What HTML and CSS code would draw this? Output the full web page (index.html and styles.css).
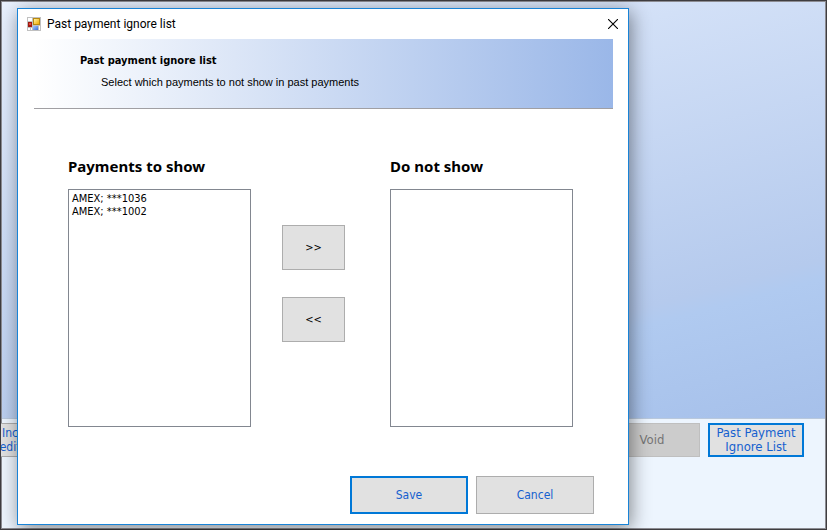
FILE: index.html
```html
<!DOCTYPE html>
<html lang="en">
<head>
<meta charset="utf-8">
<title>Past payment ignore list</title>
<link rel="stylesheet" href="styles.css">
</head>
<body>
<div class="app">
  <div class="workspace"></div>
  <footer class="actions">
    <button class="btn tool clipped" type="button">Inc<br>edit</button>
    <button class="btn tool void" type="button" disabled>Void</button>
    <button class="btn tool primary" type="button">Past Payment Ignore List</button>
  </footer>
</div>
<section class="dialog" role="dialog" aria-labelledby="caption">
  <div class="titlebar">
    <svg class="app-icon" viewBox="0 0 14 14" width="14" height="14" shape-rendering="crispEdges" aria-hidden="true">
      <defs>
        <linearGradient id="gold" x2="1" y2="1"><stop offset="0" stop-color="#fff0a0"/><stop offset="1" stop-color="#f0ac00"/></linearGradient>
        <linearGradient id="blue" x2="1" y2="1"><stop offset="0" stop-color="#a5c8ff"/><stop offset="1" stop-color="#3c70d8"/></linearGradient>
      </defs>
      <path fill="#c0c0c0" d="M0 0h14v14H0z"/>
      <path fill="#fff" d="M1 1h4v3H1zM1 11h2v2H1zM4 11h1v2H4zM12 9h1v4h-1z"/>
      <path fill="#a01810" d="M1 5h4v5H1z"/>
      <path fill="#e04838" d="M2 6h2v2H2z"/>
      <path fill="#b88810" d="M6 1h7v7H6z"/>
      <path fill="url(#gold)" d="M7 2h5v5H7z"/>
      <path fill="url(#blue)" d="M6 9h5v4H6z"/>
    </svg>
    <span class="caption" id="caption">Past payment ignore list</span>
    <button class="close" type="button" aria-label="Close">
      <svg viewBox="0 0 10 10" width="10" height="10" aria-hidden="true"><path d="M0 0l10 10M10 0L0 10" stroke="#000" stroke-width="1.1"/></svg>
    </button>
  </div>
  <header class="banner">
    <h1>Past payment ignore list</h1>
    <p>Select which payments to not show in past payments</p>
  </header>
  <div class="lists">
    <div class="column">
      <label for="shown">Payments to show</label>
      <select id="shown" multiple>
        <option>AMEX; ***1036</option>
        <option>AMEX; ***1002</option>
      </select>
    </div>
    <div class="movers">
      <button class="btn move" type="button">&gt;&gt;</button>
      <button class="btn move" type="button">&lt;&lt;</button>
    </div>
    <div class="column">
      <label for="hidden">Do not show</label>
      <select id="hidden" multiple></select>
    </div>
  </div>
  <div class="commands">
    <button class="btn command primary" type="button">Save</button>
    <button class="btn command" type="button">Cancel</button>
  </div>
</section>
</body>
</html>
```

FILE: styles.css
```css
* {
  box-sizing: border-box;
}

body {
  margin: 0;
  height: 100vh;
  position: relative;
  overflow: hidden;
  font-family: "Noto Sans", sans-serif;
  color: #000;
}

.app {
  height: 100%;
  display: flex;
  flex-direction: column;
  border: 1px solid #3f3d40;
  box-shadow: inset 0 0 0 1px #8c8c92;
  background: #edf5fe;
}

.workspace {
  flex: 1;
  margin: 1px 1px 0 1px;
  background: linear-gradient(165deg, #e9f1fe 0%, #d2e0f7 30%, #b5caed 75%, #b0caf0 78%, #a6c0ea 100%);
  border-bottom: 1px solid #b9c8dc;
}

.actions {
  display: flex;
  gap: 8px;
  height: 110px;
  padding: 4px 22px 0 0;
  overflow: hidden;
}

.btn {
  margin: 0;
  padding: 0;
  border: 1px solid #adadad;
  background: #e1e1e1;
  color: #1560cf;
  font: 12px/14px "DejaVu Sans Condensed", "DejaVu Sans", sans-serif;
}

.primary {
  border: 2px solid #0078d7;
}

.tool {
  width: 96px;
  height: 34px;
  font-size: 13px;
}

.clipped {
  width: 26px;
  margin-left: -4px;
  font-size: 12px;
}

.void {
  margin-left: auto;
  background: #cccccc;
  border-color: #bfbfbf;
  color: #757575;
}

.dialog {
  position: absolute;
  inset: 8px 198px 5px 17px;
  display: flex;
  flex-direction: column;
  border: 1px solid #1883d7;
  background: #fff;
  box-shadow: 2px 4px 18px rgba(0, 0, 0, 0.45);
}

.titlebar {
  display: flex;
  align-items: center;
  height: 30px;
  padding: 0 10px 0 9px;
}

.caption {
  margin-left: 6px;
  font: 12px/16px Roboto, sans-serif;
}

.close {
  display: flex;
  margin-left: auto;
  padding: 0;
  border: 0;
  background: none;
}

.banner {
  height: 70px;
  margin: 0 15px 0 16px;
  padding: 15px 0 0 46px;
  border-bottom: 1px solid #a09fa3;
  background: linear-gradient(90deg, #fff, #9ab7e8);
}

.banner h1 {
  margin: 0;
  font: bold 11px/14px "DejaVu Sans Condensed", sans-serif;
}

.banner p {
  margin: 7px 0 0 21px;
  font: 11px/14px "Liberation Sans", sans-serif;
}

.lists {
  display: flex;
  margin: 47px 0 0 50px;
}

.column {
  display: flex;
  flex-direction: column;
  width: 183px;
}

.column label {
  margin-bottom: 13px;
  font: bold 15px/20px "Noto Sans", sans-serif;
}

select {
  height: 238px;
  padding: 2px 1px;
  border: 1px solid #828790;
  border-radius: 0;
  background: #fff;
  color: #000;
  overflow: hidden;
  outline: 0;
  font: 11px/13px "DejaVu Sans Condensed", sans-serif;
}

option {
  height: 13px;
  min-height: 13px;
  padding: 0 2px;
  line-height: 13px;
}

.movers {
  display: flex;
  flex-direction: column;
  gap: 27px;
  margin: 0 45px 0 31px;
  padding-top: 69px;
}

.move {
  width: 63px;
  height: 45px;
  color: #000;
  font-size: 11px;
}

.commands {
  display: flex;
  justify-content: flex-end;
  gap: 8px;
  margin: auto 34px 10px 0;
}

.command {
  width: 118px;
  height: 38px;
}
```
